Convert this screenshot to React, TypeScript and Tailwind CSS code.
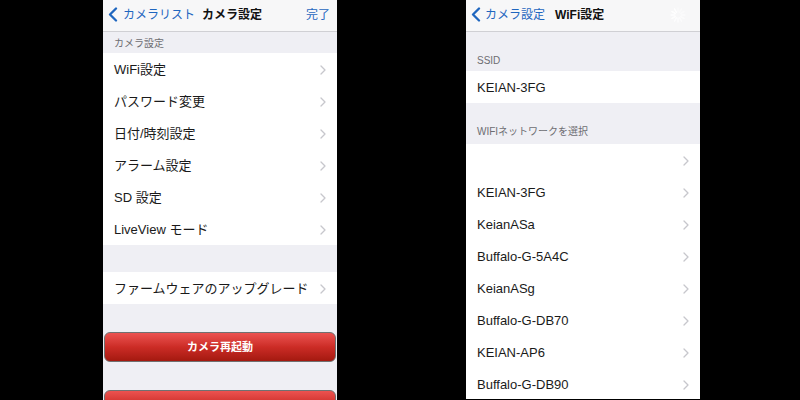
import React from "react";

const font = { fontFamily: '"Liberation Sans", "Noto Sans CJK JP", sans-serif' };

function Chevron() {
  return (
    <svg width="6" height="10" viewBox="0 0 6 10" className="shrink-0">
      <path d="M1 1 L5 5 L1 9" fill="none" stroke="#c7c7cc" strokeWidth="1.3" strokeLinecap="round" strokeLinejoin="round" />
    </svg>
  );
}

function BackChevron() {
  return (
    <svg width="10" height="15" viewBox="0 0 10 15" className="shrink-0">
      <path d="M8 1.5 L2 7.5 L8 13.5" fill="none" stroke="#1f66bf" strokeWidth="2.3" strokeLinecap="round" strokeLinejoin="round" />
    </svg>
  );
}

function Spinner() {
  const lines = Array.from({ length: 12 }, (_, i) => i);
  return (
    <svg width="16" height="16" viewBox="-8 -8 16 16">
      {lines.map((i) => (
        <line
          key={i}
          x1="0"
          y1="-3"
          x2="0"
          y2="-7"
          stroke="#ffffff"
          strokeWidth="1.6"
          strokeLinecap="round"
          opacity={0.35 + (i / 12) * 0.65}
          transform={`rotate(${i * 30})`}
        />
      ))}
    </svg>
  );
}

function Row({ label }: { label: string }) {
  return (
    <div className="h-[32px] shrink-0 bg-white flex items-center justify-between pl-[11px] pr-[11px] pt-[2px] text-[13px] text-[#1a1a1a]">
      <span className="whitespace-nowrap">{label}</span>
      <Chevron />
    </div>
  );
}

function RedButton({ label }: { label: string }) {
  return (
    <div className="h-[30px] mx-[1px] rounded-[6px] border border-[#707070] bg-gradient-to-b from-[#ec5250] via-[#cc2c26] to-[#a4190f] flex items-center justify-center text-white text-[11px] font-bold shrink-0">
      {label}
    </div>
  );
}

export default function App() {
  const leftRows = ["WiFi設定", "パスワード変更", "日付/時刻設定", "アラーム設定", "SD 設定", "LiveView モード"];
  const nets = ["", "KEIAN-3FG", "KeianASa", "Buffalo-G-5A4C", "KeianASg", "Buffalo-G-DB70", "KEIAN-AP6", "Buffalo-G-DB90"];
  return (
    <div className="w-[800px] h-[400px] bg-black flex overflow-hidden" style={font}>
      {/* Left phone */}
      <div className="ml-[103px] w-[234px] h-[400px] bg-[#efeff4] flex flex-col overflow-hidden">
        <div className="h-[32px] shrink-0 bg-[#f7f7f8] border-b border-[#d0d0d4] flex items-center pl-[5px] pr-[7px] pb-[2px]">
          <BackChevron />
          <span className="ml-[5px] text-[12px] text-[#1f66bf] whitespace-nowrap">カメラリスト</span>
          <span className="ml-[7px] text-[12px] font-bold text-[#111] whitespace-nowrap">カメラ設定</span>
          <span className="ml-auto text-[12px] text-[#1f66bf]">完了</span>
        </div>
        <div className="h-[21px] shrink-0 flex items-center pl-[11px] pt-[1px] text-[10px] text-[#6d6d72]">カメラ設定</div>
        {leftRows.map((r) => (
          <Row key={r} label={r} />
        ))}
        <div className="h-[27px] shrink-0" />
        <Row label="ファームウェアのアップグレード" />
        <div className="h-[28px] shrink-0" />
        <RedButton label="カメラ再起動" />
        <div className="h-[28px] shrink-0" />
        <RedButton label="" />
      </div>

      {/* Right phone */}
      <div className="ml-[129px] w-[234px] h-[399px] bg-[#efeff4] flex flex-col overflow-hidden">
        <div className="h-[32px] shrink-0 bg-[#f7f7f8] border-b border-[#d0d0d4] flex items-center pl-[5px] pr-[14px] pb-[2px]">
          <BackChevron />
          <span className="ml-[4px] text-[12px] text-[#1f66bf] whitespace-nowrap">カメラ設定</span>
          <span className="ml-[10px] text-[12px] font-bold text-[#111] whitespace-nowrap">WiFi設定</span>
          <span className="ml-auto flex items-center">
            <Spinner />
          </span>
        </div>
        <div className="h-[39px] shrink-0 flex items-end pl-[11px] pb-[3px] text-[10px] text-[#6d6d72]">SSID</div>
        <div className="h-[32px] shrink-0 bg-white flex items-center pl-[11px] pt-[2px] text-[13px] text-[#1a1a1a]">KEIAN-3FG</div>
        <div className="h-[41px] shrink-0 flex items-end pl-[11px] pb-[5px] text-[10px] text-[#6d6d72]">WIFIネットワークを選択</div>
        {nets.map((n, i) => (
          <Row key={i} label={n} />
        ))}
        <div className="h-[1px] shrink-0 bg-[#bdbdc2]" />
      </div>
    </div>
  );
}
